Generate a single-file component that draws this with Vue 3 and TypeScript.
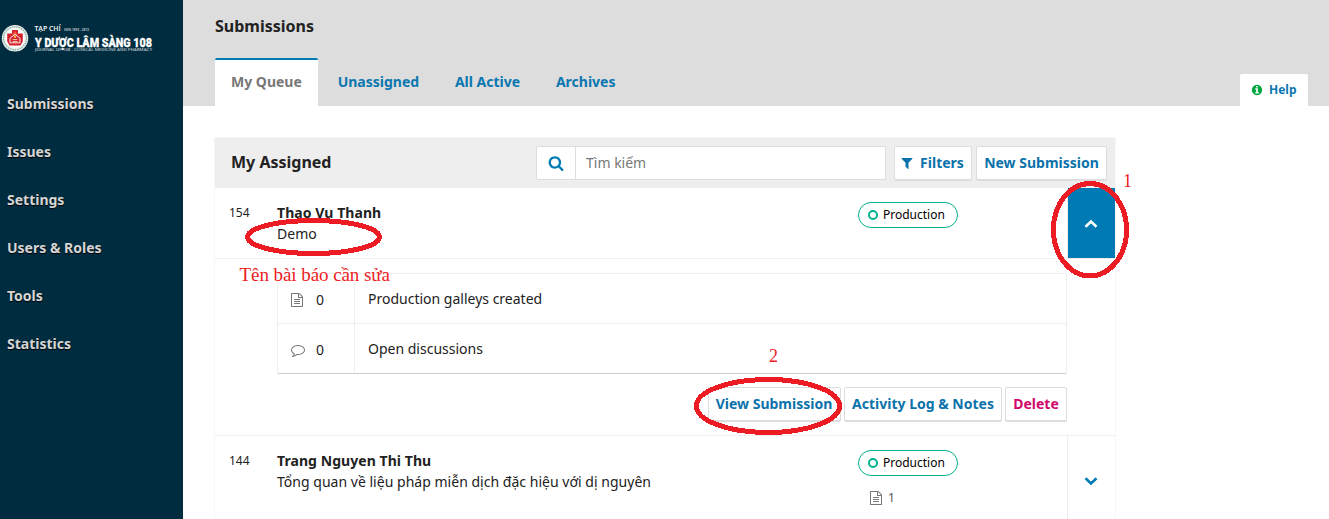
<script setup lang="ts">
interface Stat {
  icon: 'file' | 'comment'
  count: number
  label: string
}

const nav: string[] = ['Submissions', 'Issues', 'Settings', 'Users & Roles', 'Tools', 'Statistics']
const tabs: string[] = ['My Queue', 'Unassigned', 'All Active', 'Archives']
const stats: Stat[] = [
  { icon: 'file', count: 0, label: 'Production galleys created' },
  { icon: 'comment', count: 0, label: 'Open discussions' },
]

const icons = {
  info: 'M1152 1376v-160q0-14-9-23t-23-9h-96v-512q0-14-9-23t-23-9h-320q-14 0-23 9t-9 23v160q0 14 9 23t23 9h96v320h-96q-14 0-23 9t-9 23v160q0 14 9 23t23 9h448q14 0 23-9t9-23zm-128-896v-160q0-14-9-23t-23-9h-192q-14 0-23 9t-9 23v160q0 14 9 23t23 9h192q14 0 23-9t9-23zm640 416q0 209-103 385.5t-279.5 279.5-385.5 103-385.5-103-279.5-279.5-103-385.5 103-385.5 279.5-279.5 385.5-103 385.5 103 279.5 279.5 103 385.5z',
  search: 'M1216 832q0-185-131.5-316.5t-316.5-131.5-316.5 131.5-131.5 316.5 131.5 316.5 316.5 131.5 316.5-131.5 131.5-316.5zm512 832q0 52-38 90t-90 38q-54 0-90-38l-343-342q-179 124-399 124-143 0-273.5-55.5t-225-150-150-225-55.5-273.5 55.5-273.5 150-225 225-150 273.5-55.5 273.5 55.5 225 150 150 225 55.5 273.5q0 220-124 399l343 343q37 37 37 90z',
  filter: 'M1595 295q17 41-14 70l-493 493v742q0 42-39 59-13 5-25 5-27 0-45-19l-256-256q-19-19-19-45v-486l-493-493q-31-29-14-70 17-39 59-39h1280q42 0 59 39z',
  file: 'M1596 380q28 28 48 76t20 88v1152q0 40-28 68t-68 28h-1344q-40 0-68-28t-28-68v-1600q0-40 28-68t68-28h896q40 0 88 20t76 48zm-444-244v376h376q-10-29-22-41l-313-313q-12-12-41-22zm384 1528v-1024h-416q-40 0-68-28t-28-68v-416h-768v1536h1280zm-1024-864q0-14 9-23t23-9h704q14 0 23 9t9 23v64q0 14-9 23t-23 9h-704q-14 0-23-9t-9-23v-64zm736 224q14 0 23 9t9 23v64q0 14-9 23t-23 9h-704q-14 0-23-9t-9-23v-64q0-14 9-23t23-9h704zm0 256q14 0 23 9t9 23v64q0 14-9 23t-23 9h-704q-14 0-23-9t-9-23v-64q0-14 9-23t23-9h704z',
  comment: 'M896 384q-204 0-381.5 69.5t-282 187.5-104.5 255q0 112 71.5 213.5t201.5 175.5l87 50-27 96q-24 91-70 172 152-63 275-171l43-38 57 6q69 8 130 8 204 0 381.5-69.5t282-187.5 104.5-255-104.5-255-282-187.5-381.5-69.5zm896 512q0 174-120 321.5t-326 233-450 85.5q-70 0-145-8-198 175-460 242-49 14-114 22h-5q-15 0-27-10.5t-16-27.5v-1q-3-4-.5-12t2-10 4.5-9.5l6-9 7-8.5 8-9q7-8 31-34.5t34.5-38 31-39.5 32.5-51 27-59 26-76q-157-89-247.5-220t-90.5-281q0-174 120-321.5t326-233 450-85.5 450 85.5 326 233 120 321.5z',
}
</script>

<template>
  <div class="app">
    <aside class="sidebar">
      <svg class="logo" width="183" height="40" viewBox="0 18 183 40">
        <circle cx="15" cy="38.3" r="13.2" fill="#e9efec" />
        <circle cx="15" cy="38.3" r="11.5" fill="none" stroke="#7faa98" stroke-width="1.3" stroke-dasharray="1.4 1" />
        <circle cx="15" cy="38.3" r="9.8" fill="#fff" />
        <path d="M12 30h6v3.6h4.8v8l-2.4 3.8h-10.8l-2.4-3.8v-8H12z" fill="#d3222c" />
        <path d="M15 31l3.2 4.2h-6.4z" fill="#ed5a45" />
        <path d="M10 38.2l5-3.8 5 3.8v4.6H10z" fill="none" stroke="#fff" stroke-width=".9" />
        <path d="M12.6 39.6h4.8M12.6 41.6h4.8" stroke="#f4c9b2" stroke-width="1" />
        <circle cx="15" cy="36.8" r="1.1" fill="#ffd43b" />
        <text x="34.5" y="31.2" font-size="6.6" font-weight="600" textLength="26" lengthAdjust="spacingAndGlyphs">TẠP CHÍ</text>
        <text x="64" y="31.2" font-size="4" font-weight="700" opacity=".65" textLength="25" lengthAdjust="spacingAndGlyphs">ISSN 1859 - 2872</text>
        <text class="brand" x="35" y="46.8" font-size="13.2" textLength="117" lengthAdjust="spacingAndGlyphs">Y DƯỢC LÂM SÀNG 108</text>
        <text x="35" y="51" font-size="3.2" font-weight="600" opacity=".7" textLength="117" lengthAdjust="spacingAndGlyphs">JOURNAL OF 108 - CLINICAL MEDICINE AND PHARMACY</text>
      </svg>
      <nav class="nav">
        <a v-for="item in nav" :key="item">{{ item }}</a>
      </nav>
    </aside>

    <main class="main">
      <header class="header">
        <h1>Submissions</h1>
        <div class="tabs">
          <a v-for="(tab, i) in tabs" :key="tab" :class="{ active: i === 0 }">{{ tab }}</a>
          <a class="help">
            <svg width="12" height="12" viewBox="0 0 1792 1792"><path :d="icons.info" /></svg>Help
          </a>
        </div>
      </header>

      <section class="panel">
        <div class="panel-head">
          <h2>My Assigned</h2>
          <div class="search">
            <span class="search-icon">
              <svg width="16" height="16" viewBox="0 0 1792 1792"><path :d="icons.search" /></svg>
            </span>
            <span class="search-input">Tìm kiếm</span>
          </div>
          <a class="btn filters">
            <svg width="14" height="14" viewBox="0 0 1792 1792"><path :d="icons.filter" /></svg>Filters
          </a>
          <a class="btn new">New Submission</a>
        </div>

        <div class="row">
          <span class="id">154</span>
          <div class="title"><b>Thao Vu Thanh</b><span>Demo</span></div>
          <div class="stage"><span class="badge"><i></i>Production</span></div>
          <span class="toggle open">
            <svg width="14" height="10" viewBox="0 0 14 10"><path d="M1.5 7.7L7 2.6l5.5 5.1" /></svg>
          </span>
        </div>

        <div class="details">
          <div class="stats">
            <div v-for="s in stats" :key="s.label" class="stat">
              <span class="count">
                <svg width="14" height="14" viewBox="0 0 1792 1792"><path :d="icons[s.icon]" /></svg>{{ s.count }}
              </span>
              <span class="label">{{ s.label }}</span>
            </div>
          </div>
          <div class="actions">
            <a class="btn view">View Submission</a>
            <a class="btn log">Activity Log &amp; Notes</a>
            <a class="btn delete">Delete</a>
          </div>
        </div>

        <div class="row last">
          <span class="id">144</span>
          <div class="title"><b>Trang Nguyen Thi Thu</b><span>Tổng quan về liệu pháp miễn dịch đặc hiệu với dị nguyên</span></div>
          <div class="stage">
            <span class="badge"><i></i>Production</span>
            <span class="files">
              <svg width="14" height="14" viewBox="0 0 1792 1792"><path :d="icons.file" /></svg>1
            </span>
          </div>
          <span class="toggle">
            <svg width="14" height="10" viewBox="0 0 14 10"><path d="M1.5 2.3L7 7.4l5.5-5.1" /></svg>
          </span>
        </div>
      </section>
    </main>

    <svg class="notes" width="1329" height="519" viewBox="0 0 1329 519">
      <g fill="none" stroke="#ed1c24" stroke-width="5" shape-rendering="crispEdges">
        <ellipse cx="313.5" cy="237" rx="66" ry="16.5" />
        <ellipse cx="1090" cy="229.7" rx="36.6" ry="46.2" />
        <ellipse cx="768" cy="406" rx="71.6" ry="26.5" />
      </g>
      <text x="239.5" y="281" font-size="19" textLength="150.5">Tên bài báo cần sửa</text>
      <text x="1123" y="187" font-size="18">1</text>
      <text x="769" y="362" font-size="18">2</text>
    </svg>
  </div>
</template>

<style>
body {
  margin: 0;
  overflow: hidden;
}
</style>

<style scoped>
* {
  box-sizing: border-box;
}
.app {
  position: relative;
  display: flex;
  height: 519px;
  overflow: hidden;
  background: #fff;
  color: #222;
  font: 14px/20px "Noto Sans", sans-serif;
}
svg {
  display: block;
  flex: none;
  fill: currentColor;
}
.sidebar {
  width: 183px;
  flex: none;
  padding-top: 18px;
  background: #002c40;
}
.logo text {
  fill: #fff;
  font-family: "Open Sans", sans-serif;
}
.logo .brand {
  font-family: Roboto, sans-serif;
  font-weight: 900;
  stroke: #fff;
  stroke-width: 0.3px;
}
.nav {
  display: flex;
  flex-direction: column;
  margin-top: 22px;
}
.nav a {
  height: 48px;
  padding-left: 7px;
  line-height: 48px;
  font-weight: 700;
  color: #d5d5d5;
  text-shadow: 0 1px 1px #000;
}
.main {
  flex: 1;
}
.header {
  display: flex;
  flex-direction: column;
  justify-content: space-between;
  height: 106px;
  padding: 14px 21px 0 32px;
  background: #ddd;
}
h1,
h2 {
  margin: 0;
  font-size: 16px;
  line-height: 24px;
  font-weight: 700;
}
.tabs {
  display: flex;
  align-items: flex-end;
}
.tabs a {
  height: 48px;
  margin-right: 4px;
  padding: 0 15.8px 0 16px;
  border-top: 2px solid transparent;
  line-height: 43px;
  font-weight: 700;
  color: #0b77b0;
}
.tabs a.active {
  border-color: #007ab2;
  border-radius: 2px 2px 0 0;
  background: #fff;
  color: #777;
}
.tabs a.help {
  display: flex;
  align-items: center;
  gap: 6px;
  width: 68px;
  height: 32px;
  margin: 0 0 0 auto;
  padding: 0 0 1px 11px;
  border: 0;
  border-radius: 2px 2px 0 0;
  background: #fff;
  font-size: 12px;
  line-height: 18px;
}
.help svg {
  color: #00a63f;
}
.panel {
  width: 900px;
  margin: 32px 0 0 32px;
  box-shadow: 0 0 1px #ccc;
}
.panel-head {
  display: flex;
  align-items: center;
  height: 50px;
  padding: 0 8px 0 16px;
  background: #eee;
}
h2 {
  margin-right: auto;
  padding-bottom: 2px;
}
.search {
  display: flex;
  width: 350px;
  height: 34px;
  margin-right: 8px;
  border: 1px solid #ddd;
  border-radius: 2px;
  background: #fff;
  color: #777;
  line-height: 32px;
}
.search-icon {
  display: flex;
  align-items: center;
  justify-content: center;
  width: 39px;
  border-right: 1px solid #ddd;
  color: #007ab2;
}
.search-input {
  padding-left: 10px;
}
.btn {
  display: flex;
  align-items: center;
  justify-content: center;
  height: 34px;
  border: 1px solid #ddd;
  border-radius: 2px;
  box-shadow: 0 1px 0 #ddd;
  background: #fff;
  color: #0b72ab;
  font-weight: 700;
  white-space: nowrap;
}
.filters {
  gap: 6px;
  width: 78px;
  margin-right: 4px;
  padding-right: 2px;
}
.new {
  width: 131px;
}
.row {
  display: flex;
  height: 71px;
  padding-left: 14px;
  border-bottom: 1px solid #eee;
}
.row.last {
  height: 90px;
}
.id {
  width: 48px;
  padding-top: 15px;
  font-size: 12px;
}
.title {
  display: flex;
  flex: 1;
  flex-direction: column;
  padding-top: 14px;
  line-height: 21px;
}
.title b {
  letter-spacing: 0.06px;
}
.title span {
  letter-spacing: 0.02px;
}
.stage {
  width: 209px;
  padding-top: 14px;
}
.badge {
  display: flex;
  align-items: center;
  width: 100px;
  height: 26px;
  padding-left: 9px;
  border: 1px solid #00b28d;
  border-radius: 13px;
  color: #000;
  font-size: 12px;
}
.badge i {
  width: 10px;
  height: 10px;
  margin-right: 5px;
  border: 2px solid #00b28d;
  border-radius: 50%;
}
.files {
  display: flex;
  align-items: center;
  gap: 5px;
  margin: 12px 0 0 11px;
  color: #555;
  font-size: 12px;
}
.files svg,
.count svg {
  color: #777;
}
.toggle {
  display: flex;
  align-items: center;
  justify-content: center;
  width: 48px;
  padding: 2px 1px 0 0;
  border-left: 1px solid #eee;
  color: #007ab2;
}
.last .toggle {
  padding-top: 0;
}
.toggle.open {
  background: #007ab2;
  color: #fff;
}
.toggle path {
  fill: none;
  stroke: currentColor;
  stroke-width: 2.6;
}
.details {
  height: 177px;
  padding: 14px 48px 0 62px;
  border-bottom: 1px solid #eee;
}
.stats {
  border: 1px solid #eee;
  border-bottom-color: #ccc;
  border-radius: 2px;
}
.stat {
  display: flex;
  height: 49px;
  line-height: 50px;
}
.stat + .stat {
  height: 50px;
  border-top: 1px solid #eee;
}
.count {
  display: flex;
  align-items: center;
  gap: 12px;
  width: 77px;
  padding: 2px 0 0 12px;
  border-right: 1px solid #eee;
}
.stat + .stat .count {
  padding-left: 13px;
  gap: 11px;
}
.label {
  padding-left: 13px;
}
.actions {
  display: flex;
  justify-content: flex-end;
  gap: 3px;
  margin-top: 13px;
}
.view {
  width: 133px;
  padding-right: 1px;
}
.log {
  width: 158px;
}
.delete {
  width: 62px;
  color: #d00a6c;
}
.notes {
  position: absolute;
  top: 0;
  left: 0;
  pointer-events: none;
}
.notes text {
  fill: #ed1c24;
  font-family: "Liberation Serif", serif;
}
</style>
